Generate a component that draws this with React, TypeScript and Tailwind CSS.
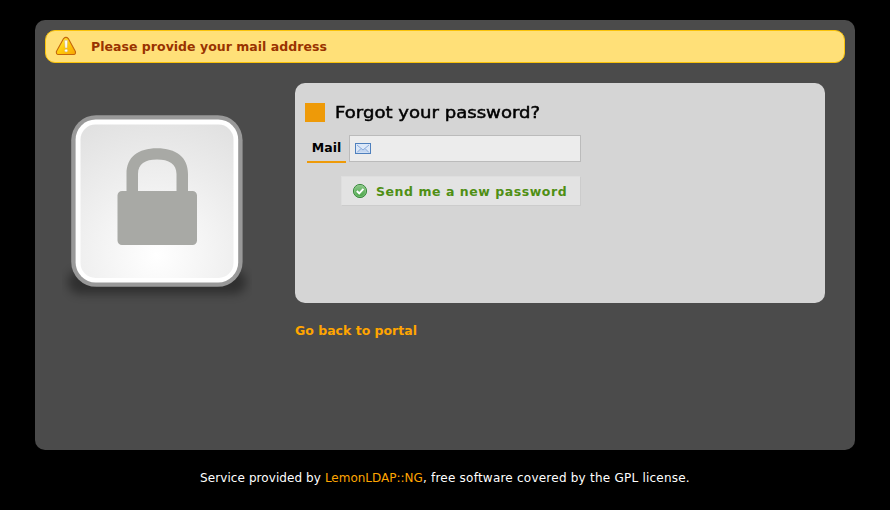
const WarningIcon = () => (
  <svg width="22" height="20" viewBox="0 0 22 20" className="mb-0.5 shrink-0">
    <defs>
      <linearGradient id="warn" x1="0" y1="0" x2="1" y2="1">
        <stop offset="0" stopColor="#fff04a" />
        <stop offset="0.5" stopColor="#ffcb0a" />
        <stop offset="1" stopColor="#f7a400" />
      </linearGradient>
    </defs>
    <path
      d="M8.6 2.6Q11 .2 13.3 2.6L20.4 15.4Q21 18.5 18.6 18.5H3.4Q1 18.5 1.4 15.4Z"
      fill="url(#warn)"
      stroke="#c4660c"
      strokeWidth="1.1"
      strokeLinejoin="round"
    />
    <path d="M9.6 4.3h3l-.5 7.7h-2Z" fill="#fff" stroke="#c9b27a" strokeWidth=".5" />
    <circle cx="11.1" cy="14.6" r="1.5" fill="#fff" stroke="#c9b27a" strokeWidth=".5" />
  </svg>
);

const MailIcon = () => (
  <svg width="16" height="11" viewBox="0 0 16 11" className="shrink-0">
    <rect x=".5" y=".5" width="15" height="10" fill="#dce8f8" stroke="#4f80bd" />
    <path d="M2 9.5L6 5.5L8 7L10 5.5L14 9.5Z" fill="#c3d6f0" />
    <path d="M2 2L8 7L14 2M2 9.5L6 5.5M14 9.5L10 5.5" fill="none" stroke="#8aabdc" />
  </svg>
);

const AcceptIcon = () => (
  <svg width="16" height="16" viewBox="0 0 16 16" className="shrink-0">
    <defs>
      <linearGradient id="accept" x1="0" y1="0" x2="0" y2="1">
        <stop offset="0" stopColor="#8fc98c" />
        <stop offset="1" stopColor="#45a344" />
      </linearGradient>
    </defs>
    <circle cx="8" cy="8" r="6.6" fill="url(#accept)" stroke="#3d8b40" />
    <circle cx="8" cy="8" r="5.6" fill="none" stroke="#8fca8b" strokeWidth=".6" />
    <path d="M4.8 8L7.2 10.3L11.4 5.8" fill="none" stroke="#fff" strokeWidth="1.9" />
  </svg>
);

const LockImage = () => (
  <svg width="190" height="200" viewBox="62 105 190 200">
    <defs>
      <radialGradient id="face" gradientUnits="userSpaceOnUse" cx="157" cy="255" r="150">
        <stop offset="0" stopColor="#fff" />
        <stop offset="1" stopColor="#e0e0e0" />
      </radialGradient>
      <filter id="soft" x="-20%" y="-80%" width="140%" height="260%">
        <feGaussianBlur stdDeviation="5" />
      </filter>
    </defs>
    <rect x="68" y="270" width="178" height="24" rx="12" fill="#000" opacity=".36" filter="url(#soft)" />
    <rect x="71.2" y="115.2" width="171.4" height="171.6" rx="25" fill="#999" />
    <rect x="75.6" y="119.6" width="162.6" height="162.8" rx="20" fill="#fff" />
    <rect x="80.5" y="124.5" width="153" height="153.5" rx="15" fill="url(#face)" />
    <path
      d="M126.5 191V174C126.5 157 138 148.3 157 148.3S188 157 188 174V191H192.500A4.500 4.500 0 0 1 197 195.500V240.500A4.500 4.500 0 0 1 192.500 245H122A4.500 4.500 0 0 1 117.500 240.500V195.500A4.500 4.500 0 0 1 122 191ZM138 191H176.500V174C176.500 164 169 159.500 157 159.500S138 164 138 174Z"
      fill="#a8a9a5"
      fillRule="evenodd"
    />
  </svg>
);

export default function App() {
  return (
    <div className="h-[510px] overflow-hidden bg-black pt-5 font-['DejaVu_Sans',sans-serif] text-[12.5px]">
      <main className="mx-auto h-[430px] w-[820px] rounded-[10px] bg-[#4b4b4b] p-2.5">
        <div className="flex h-[33px] items-center rounded-[10px] border border-[#fac30a] bg-[#ffe078] pl-[9px] font-bold text-[#993300]">
          <WarningIcon />
          <span className="mt-px ml-[14px] leading-4 tracking-[0.03px]">Please provide your mail address</span>
        </div>

        <div className="mt-5 flex">
          <div className="w-[250px] shrink-0 pt-[22px] pl-[17px]">
            <LockImage />
          </div>
          <div className="w-[530px]">
            <form className="h-[220px] rounded-[10px] bg-[#d5d5d5] pt-5 pl-2.5">
              <h3 className="flex h-[19px] items-center gap-2.5 text-[16px] text-black">
                <span className="h-[19px] w-5 bg-[#ee9a08]" />
                <span className="origin-left scale-x-[1.13] [-webkit-text-stroke:0.5px_black]">Forgot your password?</span>
              </h3>
              <div className="mt-[13px] ml-0.5 flex gap-[3px]">
                <label className="flex h-7 w-[39px] items-center justify-center border-b-2 border-[#ee9a08] font-bold text-black">
                  Mail
                </label>
                <div className="flex h-[27px] w-[232px] items-center border border-[#bbb] bg-[#ececec] pl-[5px]">
                  <MailIcon />
                </div>
              </div>
              <button
                type="button"
                className="mt-[13px] ml-9 flex h-[30px] w-[240px] items-center border border-t-[#dedede] border-r-[#ccc] border-b-[#ccc] border-l-[#dedede] bg-[#e3e3e3] pl-[10px] font-bold text-[#4f8f14]"
              >
                <AcceptIcon />
                <span className="mt-0.5 ml-2 tracking-[0.55px]">Send me a new password</span>
              </button>
            </form>
            <a href="#" className="mt-5 block leading-4 font-bold text-[#ffa500]">
              Go back to portal
            </a>
          </div>
        </div>
      </main>
      <footer className="mt-5 text-center text-[12px] leading-4 text-white">
        <span className="tracking-[0.08px]">Service provided by </span>
        <a href="#" className="text-[#ffa500]">
          LemonLDAP::NG
        </a>
        <span className="tracking-[0.23px]">, free software covered by the GPL license.</span>
      </footer>
    </div>
  );
}
